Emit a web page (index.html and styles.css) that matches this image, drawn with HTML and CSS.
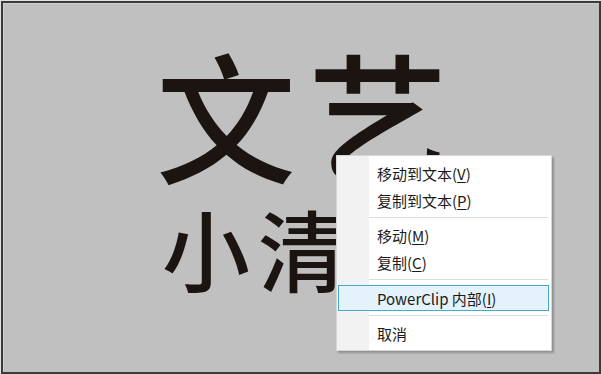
FILE: index.html
```html
<!DOCTYPE html>
<html lang="zh-CN">
<head>
<meta charset="utf-8">
<title>PowerClip</title>
<link rel="stylesheet" href="styles.css">
</head>
<body>
<div class="frame">
  <div class="canvas">
    <div class="title">文艺</div>
    <div class="subtitle">小清</div>
  </div>
  <div class="menu">
    <div class="item">移动到文本(<u>V</u>)</div>
    <div class="item">复制到文本(<u>P</u>)</div>
    <div class="sep"></div>
    <div class="item">移动(<u>M</u>)</div>
    <div class="item">复制(<u>C</u>)</div>
    <div class="sep"></div>
    <div class="item active">PowerClip 内部(<u>I</u>)</div>
    <div class="sep"></div>
    <div class="item">取消</div>
  </div>
</div>
</body>
</html>
```

FILE: styles.css
```css
html, body {
  margin: 0;
  padding: 0;
  background: #e2e2e2;
}
.frame {
  position: relative;
  box-sizing: border-box;
  width: 600px;
  height: 373px;
  margin: 1px 0 0 1px;
  border: 2px solid #3a3a3a;
  background: #c0c0c0;
  box-shadow: inset 1px 1px 0 #cfcfcf;
  overflow: hidden;
}
.canvas {
  display: flex;
  flex-direction: column;
  padding: 39px 0 0 153px;
  font-family: "Noto Sans CJK SC", "Noto Sans", sans-serif;
  font-weight: 500;
  color: #1b1411;
}
.title {
  font-size: 140px;
  line-height: 1;
  letter-spacing: 12px;
  white-space: nowrap;
}
.subtitle {
  margin-top: 21px;
  margin-left: 6px;
  font-size: 88px;
  line-height: 1;
  letter-spacing: 8px;
  white-space: nowrap;
}
.menu {
  position: absolute;
  left: 333px;
  top: 152px;
  box-sizing: border-box;
  width: 216px;
  height: 196px;
  padding: 4px 0 3px;
  border: 1px solid #d6d6d6;
  background: linear-gradient(to right, #f2f2f2 0, #f2f2f2 32px, #ffffff 32px);
  box-shadow: 2px 2px 2px rgba(0, 0, 0, 0.25);
  font-family: "Noto Sans CJK SC", "Noto Sans", sans-serif;
  font-size: 15px;
  color: #1a1a1a;
  display: flex;
  flex-direction: column;
}
.item {
  box-sizing: border-box;
  height: 27px;
  margin: 0 2px 0 1px;
  padding-left: 38px;
  border: 1px solid transparent;
  display: flex;
  align-items: center;
  white-space: nowrap;
}
.item u {
  text-underline-offset: 2px;
}
.item.active {
  border-color: #4aa8cc;
  background: #e3f2fb;
}
.sep {
  height: 9px;
  margin: 0 3px 0 32px;
  display: flex;
  flex-direction: column;
  justify-content: center;
}
.sep::before {
  content: "";
  display: block;
  height: 1px;
  background: #dcdcdc;
  border-bottom: 1px solid #ffffff;
}
```
